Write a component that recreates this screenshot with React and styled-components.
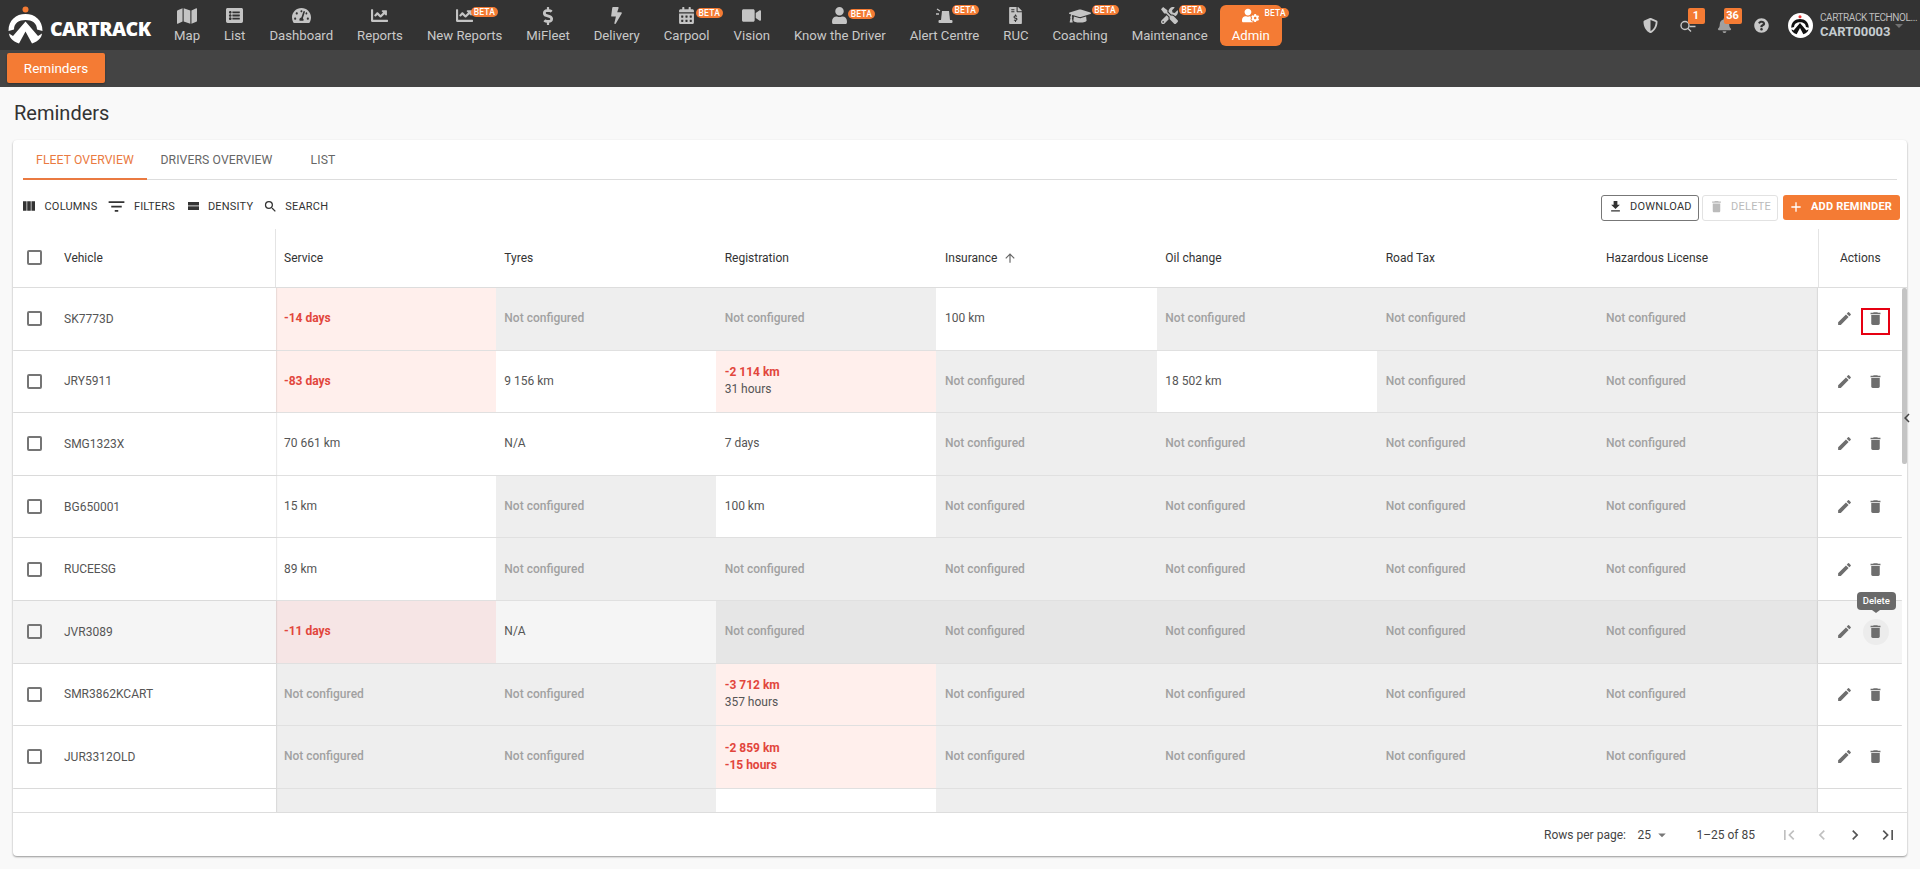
import React from "react";
import styled, { createGlobalStyle } from "styled-components";
import {
  FaMap, FaListAlt, FaTachometerAlt, FaChartLine, FaDollarSign, FaBolt, FaCalendarAlt, FaVideo, FaUser,
  FaFileInvoiceDollar, FaGraduationCap, FaTools, FaUserCog, FaBell, FaQuestionCircle, FaShieldAlt,
} from "react-icons/fa";
import {
  MdEdit, MdDelete, MdViewColumn, MdFilterList, MdSearch, MdFileDownload, MdAdd, MdArrowUpward,
  MdFirstPage, MdChevronLeft, MdChevronRight, MdLastPage, MdArrowDropDown,
} from "react-icons/md";

const ORANGE = "#f47b34";
const Global = createGlobalStyle`
  html, body { margin: 0; padding: 0; background: #f9f9f9; }
  body { font-family: Roboto, "Liberation Sans", sans-serif; }
  *, *::before, *::after { box-sizing: border-box; }
`;
const Page = styled.div`display:flex;flex-direction:column;height:869px;overflow:hidden;background:#f9f9f9;`;
const TopBar = styled.header`display:flex;align-items:flex-start;height:50px;background:#333;padding-left:8px;flex:none;`;
const Logo = styled.div`display:flex;align-items:flex-start;gap:7px;width:154px;height:50px;flex:none;padding-top:6px;`;
const LogoWord = styled.span`font:800 19.5px/1 "Open Sans",Roboto,sans-serif;letter-spacing:-.55px;color:#fff;margin-top:13px;white-space:nowrap;`;
const Nav = styled.nav`display:flex;align-items:flex-start;flex:none;`;
const NavItem = styled.div`
  position:relative;display:flex;flex-direction:column;align-items:center;height:41px;margin-top:5px;padding:0 12px;
  border-radius:6px;font-size:13.17px;line-height:16px;white-space:nowrap;
  color:${p => (p.$active ? "#fff" : "#c9c9c9")};background:${p => (p.$active ? ORANGE : "transparent")};
`;
const NavIcon = styled.div`height:21px;margin-bottom:2px;display:flex;align-items:center;justify-content:center;color:${p => (p.$active ? "#fff" : "#c4c4c4")};`;
const Beta = styled.span`
  position:absolute;left:${p => p.$left}px;top:${p => p.$top}px;height:10px;width:27px;border-radius:6px;background:${ORANGE};
  color:#fff;font-size:8.5px;line-height:10px;font-weight:500;text-align:center;letter-spacing:.2px;
`;
const Spacer = styled.div`flex:1;`;
const RightTools = styled.div`display:flex;align-items:center;height:50px;flex:none;padding-right:5px;`;
const ToolIcon = styled.div`position:relative;width:37px;height:20px;display:flex;justify-content:center;align-items:center;color:${p => p.$c || "#c8c8c8"};font-size:15px;`;
const CountBadge = styled.span`
  position:absolute;left:${p => p.$left}px;top:-7px;height:16px;width:${p => p.$w}px;background:${ORANGE};border-radius:2px;
  color:#fff;font-size:11px;line-height:16px;font-weight:700;text-align:center;
`;
const Avatar = styled.div`width:25px;height:25px;border-radius:50%;background:#fff;display:flex;align-items:center;justify-content:center;margin:0 7.5px;flex:none;`;
const Account = styled.div`position:relative;width:95px;color:#bdbdbd;`;
const Company = styled.div`font-size:10px;line-height:13px;white-space:nowrap;margin-top:-1px;letter-spacing:-.42px;`;
const AccountId = styled.div`font-size:13px;line-height:15px;font-weight:700;color:#c5ccd0;`;
const Caret = styled.span`position:absolute;right:12px;top:12px;width:0;height:0;border-left:4px solid transparent;border-right:4px solid transparent;border-top:4px solid #707070;`;
const SubBar = styled.div`height:37px;background:#444;flex:none;padding:3px 0 0 7px;`;
const SubButton = styled.div`width:98px;height:30px;background:${ORANGE};border-radius:2px;color:#fff;font-size:13.5px;line-height:30px;text-align:center;box-shadow:0 1px 2px rgba(0,0,0,.3);`;
const Main = styled.main`flex:1;display:flex;flex-direction:column;min-height:0;padding:0 13px 13px;`;
const Title = styled.h1`margin:0;height:53px;padding-top:13px;font-size:20px;line-height:26px;font-weight:400;color:#333;padding-left:1px;flex:none;`;
const Card = styled.section`flex:1;min-height:0;display:flex;flex-direction:column;background:#fff;border-radius:4px;box-shadow:0 1px 2px rgba(0,0,0,.4);`;
const Tabs = styled.div`display:flex;height:40px;margin:0 10px;border-bottom:1px solid #ddd;flex:none;`;
const Tab = styled.div`
  height:40px;width:${p => p.$w}px;text-align:center;line-height:40px;font-size:12.2px;letter-spacing:.1px;
  color:${p => (p.$active ? "#ea7a41" : "#666")};border-bottom:${p => (p.$active ? "2px solid #ea7a41" : "none")};
`;
const Toolbar = styled.div`display:flex;align-items:center;justify-content:space-between;height:49px;padding:3px 7px 0 10px;flex:none;`;
const ToolGroup = styled.div`display:flex;align-items:center;`;
const ToolButton = styled.div`display:flex;align-items:center;font-size:11px;letter-spacing:.2px;color:#333;margin-right:${p => p.$mr}px;`;
const ToolGlyph = styled.span`display:flex;width:${p => p.$w}px;margin-left:${p => p.$ml || 0}px;font-size:${p => p.$s}px;color:#333;`;
const ActionGroup = styled.div`display:flex;align-items:center;margin-top:3px;`;
const OutlineBtn = styled.div`
  display:flex;align-items:center;height:26px;border-radius:3px;font-size:11px;letter-spacing:.25px;margin-left:${p => p.$ml}px;width:${p => p.$w}px;padding-left:6px;padding-bottom:3px;gap:7px;
  border:1px solid ${p => (p.$disabled ? "#e2e2e2" : "#777")};color:${p => (p.$disabled ? "#bbb" : "#333")};
`;
const PrimaryBtn = styled.div`
  display:flex;align-items:center;height:25px;width:117px;margin-left:5px;padding-left:5px;padding-bottom:2px;gap:7px;border-radius:3px;background:${ORANGE};
  color:#fff;font-size:11px;font-weight:700;letter-spacing:.2px;
`;
const TableWrap = styled.div`flex:1;min-height:0;display:flex;flex-direction:column;position:relative;`;
const HeadRow = styled.div`display:grid;grid-template-columns:262.5px repeat(7,220.33px) 89px;height:59px;border-bottom:1px solid #ddd;flex:none;`;
const HeadCell = styled.div`display:flex;align-items:center;gap:6px;padding:0 0 1px 8.5px;font-size:12px;color:#333;`;
const FrozenHead = styled.div`display:flex;align-items:center;padding:0 0 1px 14px;font-size:12px;color:#333;border-right:1px solid #e4e4e4;`;
const ActionsHead = styled.div`display:flex;align-items:center;justify-content:center;padding:0 5px 1px 0;font-size:12px;color:#333;border-left:1px solid #e4e4e4;`;
const Box = styled.span`display:block;flex:none;width:15px;height:15px;border:2px solid #757575;border-radius:2px;margin-right:22px;`;
const Body = styled.div`flex:1;min-height:0;overflow:hidden;padding-right:5px;`;
const Row = styled.div`display:grid;grid-template-columns:262.5px repeat(7,220.33px) 1fr;height:${p => p.$h || 62.6}px;border-bottom:${p => (p.$last ? "none" : "1px solid #e0e0e0")};background:${p => (p.$hover ? "#f5f5f5" : "#fff")};`;
const VehicleCell = styled.div`display:flex;align-items:center;padding-left:14px;font-size:12px;color:#555;box-shadow:1px 0 1px rgba(0,0,0,.08);position:relative;`;
const bg = { gray: ["#eeeeee", "#e6e6e6"], red: ["#ffefec", "#f6e5e5"], plain: ["transparent", "transparent"] };
const Cell = styled.div`
  display:flex;flex-direction:column;justify-content:center;padding-left:8.5px;font-size:12px;line-height:17px;color:#555;
  background:${p => bg[p.$tone][p.$hover ? 1 : 0]};
`;
const Muted = styled.span`color:#a1a1a1;font-weight:500;`;
const Alert = styled.span`color:#e2463c;font-weight:700;`;
const ActionCell = styled.div`display:flex;align-items:center;padding-left:16px;gap:9px;position:relative;box-shadow:-1px 0 1px rgba(0,0,0,.08);`;
const IconBtn = styled.div`
  position:relative;width:22px;height:22px;display:flex;align-items:center;justify-content:center;color:#6e6e6e;font-size:17px;
`;
const TrashBtn = styled(IconBtn)`
  &::before{content:"";position:absolute;
    ${p => (p.$hover ? "left:-2px;top:-2px;width:26px;height:26px;border-radius:50%;background:#ececec;" : "")}
    ${p => (p.$marked ? "left:-4px;top:0;width:29px;height:27px;border:2px solid #e60012;" : "")}
  }
  svg{position:relative;}
`;
const Tooltip = styled.div`
  position:absolute;left:-8px;top:-29px;width:39px;height:18px;border-radius:4px;background:#6a6a6a;color:#fff;font-size:9.5px;font-weight:500;line-height:18px;text-align:center;
  &::after{content:"";position:absolute;left:15px;top:18px;border-left:4px solid transparent;border-right:4px solid transparent;border-top:3px solid #6a6a6a;}
`;
const ScrollThumb = styled.div`position:absolute;right:0;top:59px;width:5px;height:176px;background:#c4c4c4;border-radius:2px;`;
const Collapse = styled.div`position:absolute;right:-8.5px;top:180px;color:#444;font-size:18px;display:flex;`;
const Footer = styled.footer`display:flex;align-items:center;justify-content:flex-end;height:44px;border-top:1px solid #ddd;flex:none;color:#444;font-size:12px;padding-right:9px;`;
const PerPage = styled.div`display:flex;align-items:center;margin-right:25.5px;`;
const PerValue = styled.span`margin-left:11.5px;display:flex;align-items:center;gap:2px;`;
const Range = styled.span`margin-right:24px;`;
const Pager = styled.div`display:flex;align-items:center;gap:13px;`;
const PageBtn = styled.span`display:flex;font-size:20px;color:${p => (p.$off ? "#c0c0c0" : "#555")};`;

const LogoMark = ({ size = 35, dark }) => {
  const c = dark ? "#111" : "#fff";
  return (
    <svg width={size} height={size * (38 / 35)} viewBox="0 0 35 38">
      <circle cx="17.5" cy="3.5" r="3" fill={dark ? "#e33" : ORANGE} />
      <path d="M.5 25C.5 14 8 8 17.5 8s17 6 17 17l-5.500-1.500C29 17 24 14 17.500 14S6 17 6 23.500z" fill={c} />
      <path d="M1 27.500c.5 4 3 7.500 10 10l6.500-12 6.500 12c7-2.500 9.500-6 10-10l-4 2.500-12.500-14.500L5 30z" fill={c} />
    </svg>
  );
};
const Siren = () => (
  <svg width="18" height="16" viewBox="0 0 18 16" fill="currentColor">
    <path d="M6 3h7l1 9H5z" /><rect x="2.500" y="12" width="14" height="3" rx="1" />
    <path d="M1 1l3 2M0 6h3" stroke="currentColor" strokeWidth="1.300" fill="none" />
  </svg>
);
const KeySearch = () => (
  <svg width="18" height="18" viewBox="0 0 18 18" fill="none" stroke="currentColor" strokeWidth="1.400">
    <circle cx="6" cy="9.500" r="4" /><path d="M9 12.500l3 3M9.500 7l7-2M10.500 10.500h6" />
  </svg>
);
const DensityGlyph = () => (
  <svg width="11" height="8" viewBox="0 0 11 8" fill="currentColor"><rect width="11" height="3.500" /><rect y="4.300" width="11" height="3.700" /></svg>
);

const nav = [
  ["Map", <FaMap size={20} />], ["List", <FaListAlt size={17} />], ["Dashboard", <FaTachometerAlt size={19} />], ["Reports", <FaChartLine size={17} />],
  ["New Reports", <FaChartLine size={17} />, [56, 2]], ["MiFleet", <FaDollarSign size={18} />], ["Delivery", <FaBolt size={17} />],
  ["Carpool", <FaCalendarAlt size={17} />, [44, 3]], ["Vision", <FaVideo size={19} />], ["Know the Driver", <FaUser size={17} />, [66, 4]],
  ["Alert Centre", <Siren />, [54, 0]], ["RUC", <FaFileInvoiceDollar size={17} />], ["Coaching", <FaGraduationCap size={22} />, [51, 0]],
  ["Maintenance", <FaTools size={17} />, [59, 0]], ["Admin", <FaUserCog size={17} />, [42, 3], true],
];
const N = <Muted>Not configured</Muted>;
const rows = [
  ["SK7773D", ["r", "-14 days"], "n", "n", "100 km", "n", "n", "n"],
  ["JRY5911", ["r", "-83 days"], "9 156 km", ["r", "-2 114 km", "31 hours"], "n", "18 502 km", "n", "n"],
  ["SMG1323X", "70 661 km", "N/A", "7 days", "n", "n", "n", "n"],
  ["BG650001", "15 km", "n", "100 km", "n", "n", "n", "n"],
  ["RUCEESG", "89 km", "n", "n", "n", "n", "n", "n"],
  ["JVR3089", ["r", "-11 days"], "N/A", "n", "n", "n", "n", "n"],
  ["SMR3862KCART", "n", "n", ["r", "-3 712 km", "357 hours"], "n", "n", "n", "n"],
  ["JUR3312OLD", "n", "n", ["r", "-2 859 km", null, "-15 hours"], "n", "n", "n", "n"],
];
const heads = ["Service", "Tyres", "Registration", "Insurance", "Oil change", "Road Tax", "Hazardous License"];

const DataCell = ({ v, hover }) => {
  if (v === "n") return <Cell $tone="gray" $hover={hover}>{N}</Cell>;
  if (Array.isArray(v))
    return (
      <Cell $tone="red" $hover={hover}>
        <Alert>{v[1]}</Alert>
        {v[2] && <span>{v[2]}</span>}
        {v[3] && <Alert>{v[3]}</Alert>}
      </Cell>
    );
  return <Cell $tone="plain">{v}</Cell>;
};

export default function App() {
  return (
    <Page>
      <Global />
      <TopBar>
        <Logo><LogoMark /><LogoWord>CARTRACK</LogoWord></Logo>
        <Nav>
          {nav.map(([label, icon, beta, active]) => (
            <NavItem key={label} $active={active}>
              <NavIcon $active={active}>{icon}</NavIcon>
              {label}
              {beta && <Beta $left={beta[0]} $top={beta[1]}>BETA</Beta>}
            </NavItem>
          ))}
        </Nav>
        <Spacer />
        <RightTools>
          <ToolIcon><FaShieldAlt /></ToolIcon>
          <ToolIcon><KeySearch /><CountBadge $left={18.5} $w={17}>1</CountBadge></ToolIcon>
          <ToolIcon $c="#a0a0a0"><FaBell /><CountBadge $left={17.5} $w={18}>36</CountBadge></ToolIcon>
          <ToolIcon><FaQuestionCircle /></ToolIcon>
          <Avatar><LogoMark size={18} dark /></Avatar>
          <Account>
            <Company>CARTRACK TECHNOL...</Company>
            <AccountId>CART00003</AccountId>
            <Caret />
          </Account>
        </RightTools>
      </TopBar>
      <SubBar><SubButton>Reminders</SubButton></SubBar>
      <Main>
        <Title>Reminders</Title>
        <Card>
          <Tabs>
            <Tab $w={124} $active>FLEET OVERVIEW</Tab>
            <Tab $w={139}>DRIVERS OVERVIEW</Tab>
            <Tab $w={74}>LIST</Tab>
          </Tabs>
          <Toolbar>
            <ToolGroup>
              <ToolButton $mr={9}><ToolGlyph $w={23.5} $ml={-2} $s={16}><MdViewColumn /></ToolGlyph>COLUMNS</ToolButton>
              <ToolButton $mr={13}><ToolGlyph $w={27.5} $s={21}><MdFilterList /></ToolGlyph>FILTERS</ToolButton>
              <ToolButton $mr={12}><ToolGlyph $w={20} $s={14}><DensityGlyph /></ToolGlyph>DENSITY</ToolButton>
              <ToolButton $mr={0}><ToolGlyph $w={22} $ml={-2} $s={15}><MdSearch /></ToolGlyph>SEARCH</ToolButton>
            </ToolGroup>
            <ActionGroup>
              <OutlineBtn $w={98} $ml={0}><MdFileDownload size={15} />DOWNLOAD</OutlineBtn>
              <OutlineBtn $w={76} $ml={3} $disabled><MdDelete size={15} />DELETE</OutlineBtn>
              <PrimaryBtn><MdAdd size={16} />ADD REMINDER</PrimaryBtn>
            </ActionGroup>
          </Toolbar>
          <TableWrap>
            <HeadRow>
              <FrozenHead><Box />Vehicle</FrozenHead>
              {heads.map(h => (
                <HeadCell key={h}>{h}{h === "Insurance" && <MdArrowUpward size={14} color="#666" />}</HeadCell>
              ))}
              <ActionsHead>Actions</ActionsHead>
            </HeadRow>
            <Body>
              {rows.map(r => {
                const hover = r[0] === "JVR3089";
                return (
                  <Row key={r[0]} $hover={hover}>
                    <VehicleCell><Box />{r[0]}</VehicleCell>
                    {r.slice(1).map((v, i) => <DataCell key={i} v={v} hover={hover} />)}
                    <ActionCell>
                      <IconBtn><MdEdit /></IconBtn>
                      <TrashBtn $hover={hover} $marked={r[0] === "SK7773D"}>
                        <MdDelete />
                        {hover && <Tooltip>Delete</Tooltip>}
                      </TrashBtn>
                    </ActionCell>
                  </Row>
                );
              })}
              <Row $h={24} $last>
                <VehicleCell />
                <Cell $tone="gray" /><Cell $tone="gray" /><Cell $tone="plain" /><Cell $tone="gray" /><Cell $tone="gray" /><Cell $tone="gray" /><Cell $tone="gray" />
                <ActionCell />
              </Row>
            </Body>
            <ScrollThumb />
            <Collapse><MdChevronLeft /></Collapse>
          </TableWrap>
          <Footer>
            <PerPage>Rows per page:<PerValue>25<MdArrowDropDown size={18} color="#777" /></PerValue></PerPage>
            <Range>1–25 of 85</Range>
            <Pager>
              <PageBtn $off><MdFirstPage /></PageBtn>
              <PageBtn $off><MdChevronLeft /></PageBtn>
              <PageBtn><MdChevronRight /></PageBtn>
              <PageBtn><MdLastPage /></PageBtn>
            </Pager>
          </Footer>
        </Card>
      </Main>
    </Page>
  );
}
